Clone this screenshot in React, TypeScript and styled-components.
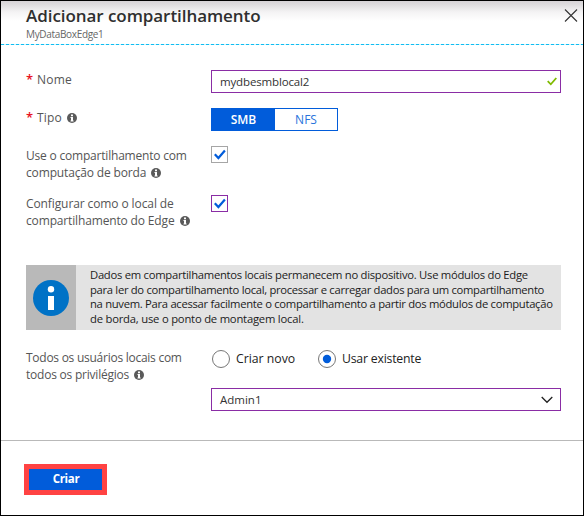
import React from "react";
import styled, { createGlobalStyle } from "styled-components";

const GlobalStyle = createGlobalStyle`
  * { box-sizing: border-box; }
  body { margin: 0; background: #fff; }
  button, input { font: inherit; letter-spacing: inherit; }
`;

const Blade = styled.main`
  width: 584px;
  height: 516px;
  border: 1px solid #000;
  background: #fff;
  color: #555;
  font-family: "Open Sans", "Noto Sans", sans-serif;
  font-size: 12px;
  line-height: 17px;
  overflow: hidden;
`;

const Header = styled.header`
  display: flex;
  justify-content: space-between;
  height: 44px;
  padding: 4px 5px 0 25px;
  background:
    repeating-linear-gradient(90deg, #12bdf1 0 3px, #c9f1fc 3px 5px) 0 100% / 100% 1px no-repeat,
    linear-gradient(#d6d3d6 0, #dfdddf 4px, #f4f3f4 11px, #fff 20px);
`;

const Title = styled.h1`
  margin: 0;
  color: #2f2f2f;
  font-size: 17px;
  font-weight: 600;
  line-height: 22px;
  white-space: nowrap;
  letter-spacing: -0.06px;
`;

const Subtitle = styled.div`
  font-size: 10px;
  line-height: 14px;
  letter-spacing: -0.33px;
  color: #666;
`;

const CloseButton = styled.button`
  width: 14px;
  height: 14px;
  margin-top: 3px;
  padding: 0;
  border: 0;
  background: none;
  svg { display: block; }
`;

const Form = styled.form`
  height: 395px;
  padding: 25px 22px 0 25px;
`;

const Row = styled.div<{ $height: number }>`
  display: grid;
  grid-template-columns: 185px 350px;
  align-items: start;
  height: ${(p) => p.$height}px;
`;

const Label = styled.div<{ $top?: number; $leading?: number }>`
  padding-top: ${(p) => p.$top ?? 0}px;
  line-height: ${(p) => p.$leading ?? 17}px;
`;

const Line = styled.span<{ $track?: number }>`
  display: flex;
  align-items: center;
  white-space: nowrap;
  letter-spacing: ${(p) => p.$track ?? 0}px;
  svg { flex: none; margin: 1px 0 0 5px; }
`;

const Required = styled.span`
  width: 11px;
  color: #e81123;
  font-size: 13px;
  font-weight: 600;
`;

const Field = styled.div`
  display: flex;
  align-items: center;
  justify-content: space-between;
  width: 350px;
  height: 23px;
  padding: 0 3px 0 8px;
  border: 1px solid #8a2da5;
  color: #333;
  font-size: 11.5px;
`;

const TextInput = styled.input`
  flex: 1;
  min-width: 0;
  padding: 0;
  border: 0;
  outline: 0;
  color: inherit;
  background: none;
  letter-spacing: -0.15px;
`;

const Chevron = styled.svg`
  margin-right: 4px;
`;

const Segments = styled.div`
  display: grid;
  grid-template-columns: 63px 62px;
  width: 127px;
  height: 23px;
  border: 1px solid #015cda;
`;

const Segment = styled.button<{ $active?: boolean }>`
  padding: 0;
  border: 0;
  background: ${(p) => (p.$active ? "#015cda" : "#fff")};
  color: ${(p) => (p.$active ? "#fff" : "#2a74dc")};
  font-size: 12px;
  font-weight: ${(p) => (p.$active ? 600 : 400)};
  line-height: 20px;
`;

const CheckBox = styled.div<{ $focused?: boolean }>`
  width: 17px;
  height: 17px;
  border: 1px solid ${(p) => (p.$focused ? "#8a2da5" : "#a6a6a6")};
  svg { display: block; }
`;

const Notice = styled.section`
  display: flex;
  height: 65px;
  margin-bottom: 19px;
  background: #e3e3e3;
  color: #1b1b1b;
`;

const NoticeIcon = styled.div`
  display: grid;
  flex: none;
  place-items: center;
  width: 50px;
  padding-top: 1px;
  background: #b9b9b9;
`;

const NoticeText = styled.div`
  padding: 3px 0 0 14px;
  font-size: 11.25px;
  line-height: 14.7px;
`;

const Radios = styled.div`
  display: flex;
  height: 20px;
`;

const RadioOption = styled.label<{ $width: number }>`
  display: flex;
  align-items: center;
  gap: 5px;
  width: ${(p) => p.$width}px;
  color: #222;
  font-size: 12.25px;
  > span { padding-bottom: 1px; }
`;

const Controls = styled.div`
  display: grid;
  row-gap: 19px;
`;

const Footer = styled.footer`
  height: 75px;
  padding: 23px 0 0 23px;
  border-top: 1px solid #b9b9b9;
`;

const CreateButton = styled.button`
  display: block;
  width: 83px;
  height: 31px;
  padding: 0 0 1px 1px;
  border: 5px solid #ff4343;
  background: #015cda;
  color: #fff;
  font-size: 11.5px;
  font-weight: 700;
  line-height: 18px;
  letter-spacing: -0.3px;
`;

const InfoDot = () => (
  <svg width="10" height="10" viewBox="0 0 10 10">
    <circle cx="5" cy="5" r="5" fill="#5a5a5a" />
    <path d="M4 1.5h2v1.7H4zM3.5 4H6v3.4h.6v1H3.5v-1H4V5h-.5z" fill="#fff" />
  </svg>
);

const BlueCheck = () => (
  <svg width="15" height="15" viewBox="0 0 15 15" fill="none">
    <path d="M2.8 7.2l3.6 3.8L12.9 3.6" stroke="#015cda" strokeWidth="2.2" />
  </svg>
);

const Radio = ({ checked = false }: { checked?: boolean }) => (
  <svg width="20" height="20" viewBox="0 0 20 20">
    <circle cx="10" cy="10" r="8.5" fill="#fff" stroke="#777" />
    {checked && <circle cx="10" cy="10" r="4.2" fill="#015cda" />}
  </svg>
);

export default function App() {
  return (
    <>
      <GlobalStyle />
      <Blade>
        <Header>
          <div>
            <Title>Adicionar compartilhamento</Title>
            <Subtitle>MyDataBoxEdge1</Subtitle>
          </div>
          <CloseButton aria-label="Fechar">
            <svg width="14" height="14" viewBox="0 0 14 14">
              <path d="M1 1.5l12 12M13 1.5l-12 12" stroke="#333" strokeWidth="1.1" />
            </svg>
          </CloseButton>
        </Header>
        <Form>
          <Row $height={38}>
            <Label $top={1}><Line $track={0.2}><Required>*</Required>Nome</Line></Label>
            <Field>
              <TextInput defaultValue="mydbesmblocal2" />
              <svg width="10" height="9" viewBox="0 0 10 9" fill="none">
                <path d="M.7 4.2L3.8 7.3 9.3 1" stroke="#7fba00" strokeWidth="1.8" />
              </svg>
            </Field>
          </Row>
          <Row $height={38}>
            <Label $top={1}><Line $track={0.2}><Required>*</Required>Tipo<InfoDot /></Line></Label>
            <Segments>
              <Segment type="button" $active>SMB</Segment>
              <Segment type="button">NFS</Segment>
            </Segments>
          </Row>
          <Row $height={49}>
            <Label $top={1}>
              <Line $track={-0.2}>Use o compartilhamento com</Line>
              <Line $track={-0.15}>computação de borda<InfoDot /></Line>
            </Label>
            <CheckBox><BlueCheck /></CheckBox>
          </Row>
          <Row $height={70}>
            <Label $top={1} $leading={16.5}>
              <Line $track={-0.1}>Configurar como o local de</Line>
              <Line $track={-0.15}>compartilhamento do Edge<InfoDot /></Line>
            </Label>
            <CheckBox $focused><BlueCheck /></CheckBox>
          </Row>
          <Notice>
            <NoticeIcon>
              <svg width="36" height="36" viewBox="0 0 36 36">
                <circle cx="18" cy="18" r="18" fill="#0072c6" />
                <circle cx="18" cy="9.3" r="3.2" fill="#fff" />
                <path d="M15 16h6v14h-6z" fill="#fff" />
              </svg>
            </NoticeIcon>
            <NoticeText>
              <Line $track={-0.27}>Dados em compartilhamentos locais permanecem no dispositivo. Use módulos do Edge</Line>
              <Line $track={-0.31}>para ler do compartilhamento local, processar e carregar dados para um compartilhamento</Line>
              <Line $track={-0.3}>na nuvem. Para acessar facilmente o compartilhamento a partir dos módulos de computação</Line>
              <Line $track={-0.21}>de borda, use o ponto de montagem local.</Line>
            </NoticeText>
          </Notice>
          <Row $height={62}>
            <Label $top={1} $leading={16.5}>
              <Line $track={-0.26}>Todos os usuários locais com</Line>
              <Line $track={-0.22}>todos os privilégios<InfoDot /></Line>
            </Label>
            <Controls>
              <Radios>
                <RadioOption $width={106}><Radio /><Line>Criar novo</Line></RadioOption>
                <RadioOption $width={120}><Radio checked /><Line $track={-0.2}>Usar existente</Line></RadioOption>
              </Radios>
              <Field>
                <Line>Admin1</Line>
                <Chevron width="12" height="8" viewBox="0 0 12 8" fill="none">
                  <path d="M.7 1L6 6.3 11.3 1" stroke="#222" strokeWidth="1.3" />
                </Chevron>
              </Field>
            </Controls>
          </Row>
        </Form>
        <Footer><CreateButton>Criar</CreateButton></Footer>
      </Blade>
    </>
  );
}
